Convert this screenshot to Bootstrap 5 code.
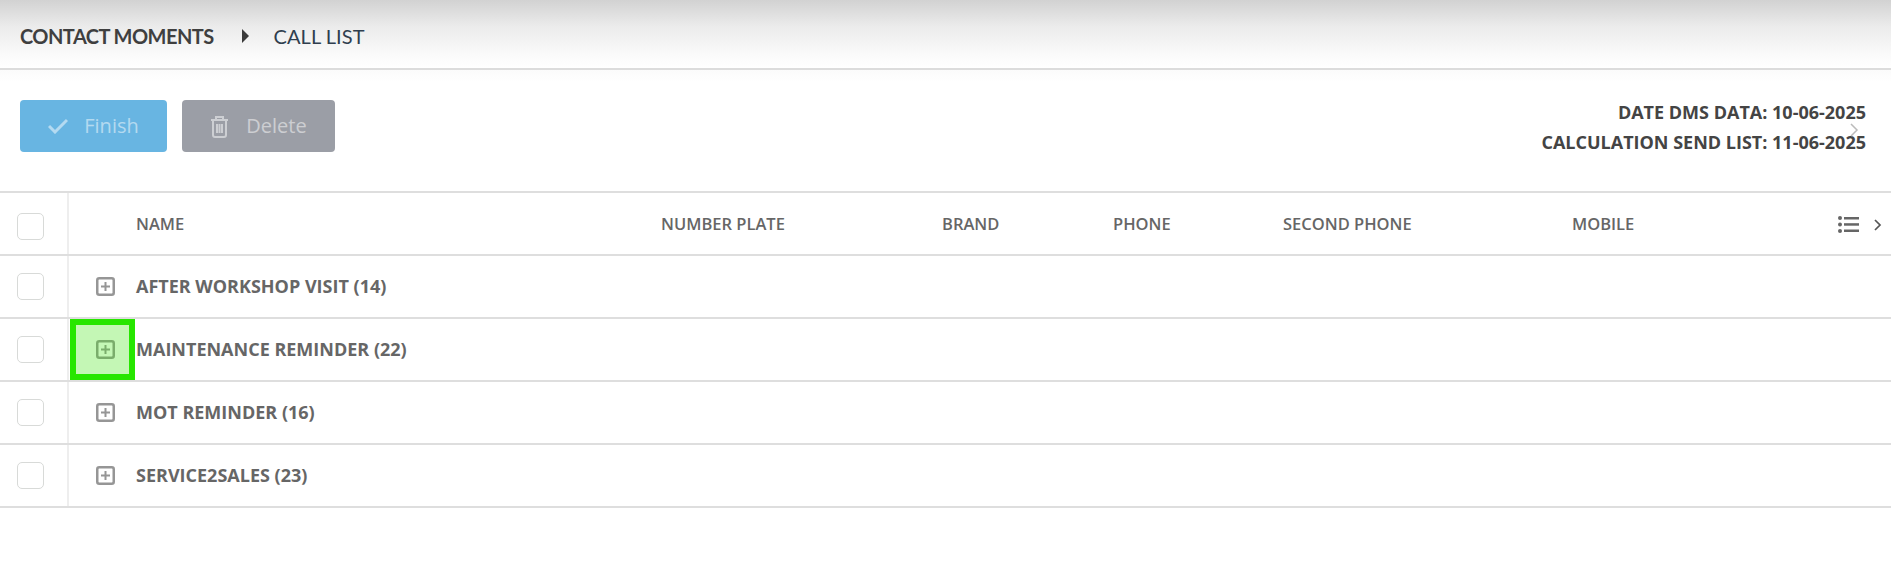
<!DOCTYPE html>
<html lang="en">
<head>
  <meta charset="UTF-8">
  <meta name="viewport" content="width=device-width, initial-scale=1.0">
  <link rel="stylesheet" href="https://cdn.jsdelivr.net/npm/bootstrap@5.3.6/dist/css/bootstrap.min.css">
  <script src="https://cdn.jsdelivr.net/npm/bootstrap@5.3.6/dist/js/bootstrap.bundle.min.js" defer></script>
  <title>Call list</title>
  <style>
    body { font-family: "Open Sans", "Liberation Sans", sans-serif; background: #fff; color: #666; overflow: hidden; }
    .top-head { height: 70px; padding: 4px 0 0 20px; border-bottom: 2px solid #dcdcdc; background: linear-gradient(#d2d2d2, #ececec 40%, #fafafa 80%, #fff); font-family: Lato, "Open Sans", sans-serif; font-size: 20px; }
    .crumb-main { color: #3f3f3f; font-weight: 700; letter-spacing: -.55px; }
    .crumb-arrow { width: 0; height: 0; margin: 0 25px 0 28px; border-left: 7px solid #3a3a3a; border-top: 7px solid transparent; border-bottom: 7px solid transparent; }
    .crumb-sub { color: #2f3e4e; letter-spacing: .05px; }
    .tool-row { height: 123px; padding: 30px 25px 0 20px; background: linear-gradient(#fbfbfb, #fff 12px); border-bottom: 2px solid #dedede; }
    .act-btn { height: 52px; border: 0; border-radius: 4px; font-size: 20px; color: rgba(255,255,255,.5); gap: 16px; }
    .act-finish { width: 147px; background: #68b5e2; }
    .act-delete { width: 153px; margin-left: -1px; background: #9b9ea6; gap: 17px; }
    .dms-dates { margin-top: -3px; font-size: 18px; font-weight: 700; line-height: 30px; color: #444; text-align: right; }
    .peek-arrow { position: absolute; left: 1850px; top: 123px; }
    .grid-list { table-layout: fixed; width: 100%; }
    .grid-list th, .grid-list td { height: 63px; padding: 0; border-bottom: 2px solid #dedede; color: #666; vertical-align: middle; box-shadow: none; }
    .grid-list th { height: 62px; padding-top: 2px; font-weight: 600; font-size: 16.500px; }
    .grid-list td { font-weight: 700; font-size: 18px; }
    .check-cell { border-right: 2px solid #eee; }
    .box-check { display: block; width: 27px; height: 27px; margin-left: 17px; border: 1px solid #d8dad8; border-radius: 5px; background: #fff; }
    .grid-list th .box-check { margin-top: 4px; }
    .plus-cell { position: relative; }
    .plus-icon { display: block; margin-left: 27px; }
    .hl-box { position: absolute; inset: 0 1px 0 1px; border: 6px solid #27e600; background: rgba(60,230,10,.3); }
    .end-tools { gap: 15px; padding-right: 9px; }
  </style>
</head>
<body>
  <!-- header -->
  <div class="top-head d-flex align-items-center">
    <span class="crumb-main">CONTACT MOMENTS</span>
    <span class="crumb-arrow"></span>
    <span class="crumb-sub">CALL LIST</span>
  </div>

  <!-- buttons + dates -->
  <div class="tool-row d-flex justify-content-between position-relative">
    <div class="d-flex gap-3">
      <button type="button" class="act-btn act-finish d-flex align-items-center justify-content-center">
        <svg width="20" height="16" viewBox="0 0 20 16" fill="none" stroke="currentColor" stroke-width="3"><path d="M1 8l6 6L19 2"/></svg>
        Finish
      </button>
      <button type="button" class="act-btn act-delete d-flex align-items-center justify-content-center">
        <svg width="19" height="23" viewBox="0 0 19 23" fill="none" stroke="currentColor" stroke-width="2"><path d="M1 5h17M6 5V2h7v3M3 5v15a2 2 0 0 0 2 2h9a2 2 0 0 0 2-2V5M7 9v9M9.500 9v9M12 9v9"/></svg>
        Delete
      </button>
    </div>
    <div class="dms-dates">
      <div>DATE DMS DATA: 10-06-2025</div>
      <div>CALCULATION SEND LIST: 11-06-2025</div>
    </div>
  </div>
  <svg class="peek-arrow" width="9" height="14" viewBox="0 0 9 14" fill="none" stroke="#bbb" stroke-width="1.500"><path d="M1 1l6 6-6 6"/></svg>

  <table class="grid-list">
    <colgroup>
      <col style="width:68px"><col style="width:68px"><col style="width:525px"><col style="width:281px"><col style="width:171px"><col style="width:170px"><col style="width:289px"><col>
    </colgroup>
    <thead>
      <tr>
        <th class="check-cell"><span class="box-check"></span></th>
        <th></th>
        <th>NAME</th>
        <th>NUMBER PLATE</th>
        <th>BRAND</th>
        <th>PHONE</th>
        <th>SECOND PHONE</th>
        <th>
          <div class="d-flex justify-content-between align-items-center">
            <span>MOBILE</span>
            <span class="end-tools d-flex align-items-center">
              <svg width="21" height="17" viewBox="0 0 21 17" fill="#666"><circle cx="2" cy="2" r="2"/><circle cx="2" cy="8.500" r="2"/><circle cx="2" cy="15" r="2"/><rect x="6" y="1" width="15" height="2.500"/><rect x="6" y="7.200" width="15" height="2.500"/><rect x="6" y="13.500" width="15" height="2.500"/></svg>
              <svg width="8" height="12" viewBox="0 0 8 12" fill="none" stroke="#555" stroke-width="1.700"><path d="M1 1l5 5-5 5"/></svg>
            </span>
          </div>
        </th>
      </tr>
    </thead>
    <tbody id="groupRows"></tbody>
  </table>

<script>
const groups = [
  { name: "AFTER WORKSHOP VISIT (14)" },
  { name: "MAINTENANCE REMINDER (22)", active: true },
  { name: "MOT REMINDER (16)" },
  { name: "SERVICE2SALES (23)" },
];

const rows = document.getElementById("groupRows");
groups.forEach((g) => {
  const tr = document.createElement("tr");
  tr.innerHTML = `
    <td class="check-cell"><span class="box-check"></span></td>
    <td class="plus-cell">
      ${g.active ? '<span class="hl-box"></span>' : ""}
      <svg class="plus-icon" width="19" height="19" viewBox="0 0 19 19" fill="none" stroke="#969696" stroke-width="2.500"><rect x="1.250" y="1.250" width="16.500" height="16.500" rx="2"/><path d="M9.500 5v9M5 9.500h9" stroke-width="2"/></svg>
    </td>
    <td colspan="6">${g.name}</td>`;
  rows.appendChild(tr);
});
</script>
</body>
</html>
